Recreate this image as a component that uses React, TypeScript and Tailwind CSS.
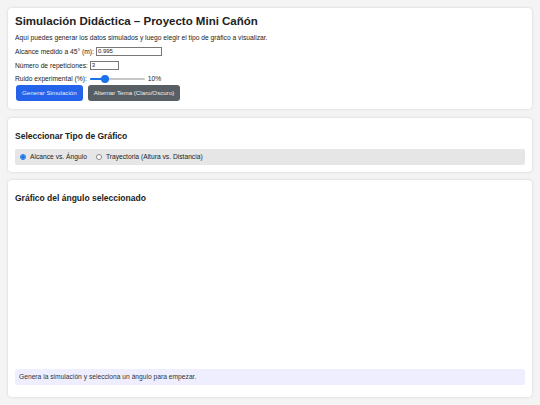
export default function App() {
  return (
    <div className="min-h-[405px] bg-[#f4f4f4] px-2 py-2 font-['Liberation_Sans',Arial,sans-serif] text-[#222]">
      {/* Controles */}
      <div className="rounded-[4px] bg-white px-[7px] pb-[8px] pt-[6px] shadow-[0_0_3px_rgba(0,0,0,0.15)]">
        <h1 className="text-[11.5px] font-bold leading-[14px] text-[#222]">Simulación Didáctica – Proyecto Mini Cañón</h1>
        <p className="mt-[5px] text-[6.7px] leading-[9px]">Aquí puedes generar los datos simulados y luego elegir el tipo de gráfico a visualizar.</p>
        <div className="mt-[5px] flex items-center gap-[1px] text-[6.7px] leading-[9px]">
          <span>Alcance medido a 45° (m):</span>
          <span className="ml-[1px] flex h-[9px] w-[66px] items-center border border-[#777] px-[1px] text-[6px]">0.995</span>
        </div>
        <div className="mt-[5px] flex items-center gap-[1px] text-[6.7px] leading-[9px]">
          <span>Número de repeticiones:</span>
          <span className="ml-[1px] flex h-[9px] w-[29px] items-center border border-[#777] px-[1px] text-[6px]">3</span>
        </div>
        <div className="mt-[4px] flex items-center text-[6.7px] leading-[9px]">
          <span>Ruido experimental (%):</span>
          <div className="relative ml-[3px] h-[8px] w-[55px]">
            <div className="absolute left-0 right-0 top-[3px] h-[2px] rounded-full bg-[#c8c8c8]" />
            <div className="absolute left-0 top-[3px] h-[2px] w-[14px] rounded-full bg-[#1a73e8]" />
            <div className="absolute left-[11px] top-0 h-[8px] w-[8px] rounded-full bg-[#1a73e8]" />
          </div>
          <span className="ml-[3px]">10%</span>
        </div>
        <div className="mt-[2px] flex gap-[5px] pl-[1px]">
          <button className="h-[16px] rounded-[3px] bg-[#2563eb] px-[6px] text-[6.2px] text-[#e6ecff]">Generar Simulación</button>
          <button className="h-[16px] rounded-[3px] bg-[#575e64] px-[6px] text-[6.2px] text-[#eef0f2]">Alternar Tema (Claro/Oscuro)</button>
        </div>
      </div>

      {/* Tipo de gráfico */}
      <div className="mt-[9px] rounded-[4px] bg-white px-[7px] pb-[7px] pt-[13px] shadow-[0_0_3px_rgba(0,0,0,0.15)]">
        <h2 className="text-[8.5px] font-bold leading-[10px]">Seleccionar Tipo de Gráfico</h2>
        <div className="mt-[8px] flex h-[16px] items-center gap-[9px] rounded-[2px] bg-[#e6e6e6] px-[5px] text-[6.7px]">
          <label className="flex items-center gap-[4px]">
            <span className="flex h-[6px] w-[6px] items-center justify-center rounded-full border border-[#1a73e8] bg-white">
              <span className="h-[4px] w-[4px] rounded-full bg-[#1a73e8]" />
            </span>
            Alcance vs. Ángulo
          </label>
          <label className="flex items-center gap-[4px]">
            <span className="h-[6px] w-[6px] rounded-full border border-[#888] bg-white" />
            Trayectoria (Altura vs. Distancia)
          </label>
        </div>
      </div>

      {/* Gráfico */}
      <div className="mt-[8px] flex h-[217px] flex-col rounded-[4px] bg-white px-[7px] pb-[12px] pt-[13px] shadow-[0_0_3px_rgba(0,0,0,0.15)]">
        <h2 className="text-[8.5px] font-bold leading-[10px]">Gráfico del ángulo seleccionado</h2>
        <div className="flex-1" />
        <div className="flex h-[16px] items-center rounded-[2px] bg-[#eeeeff] px-[4px] text-[6.7px] text-[#333]">
          Genera la simulación y selecciona un ángulo para empezar.
        </div>
      </div>
    </div>
  )
}
